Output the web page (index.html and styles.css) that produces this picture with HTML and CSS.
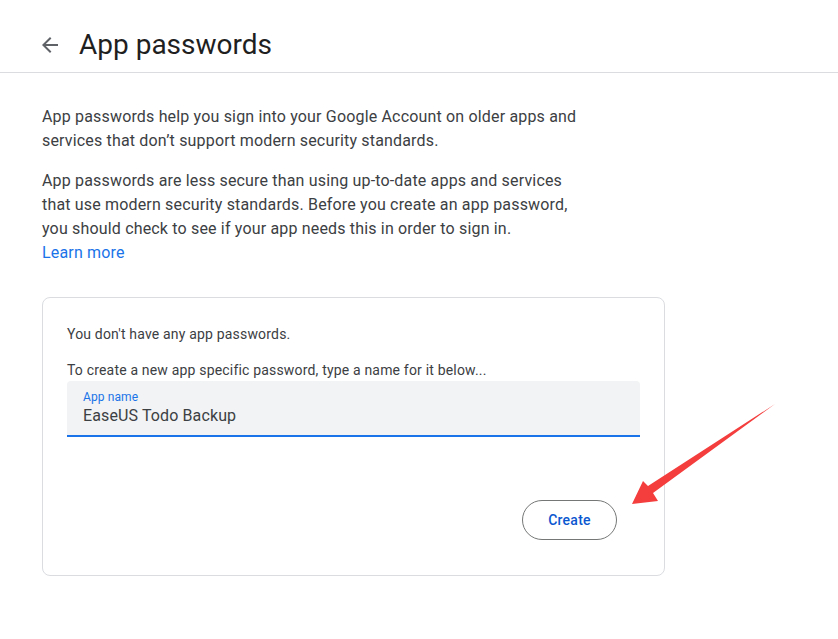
FILE: index.html
```html
<!DOCTYPE html>
<html lang="en">
<head>
<meta charset="utf-8">
<title>App passwords</title>
<link rel="stylesheet" href="styles.css">
</head>
<body>
<header class="topbar">
  <svg class="back" viewBox="0 0 24 24" width="24" height="24" aria-hidden="true"><path d="M20 11H7.83l5.59-5.59L12 4l-8 8 8 8 1.41-1.41L7.83 13H20v-2z"/></svg>
  <h1 class="title">App passwords</h1>
</header>
<main class="content">
  <p class="para">App passwords help you sign into your Google Account on older apps and services that don’t support modern security standards.</p>
  <p class="para">App passwords are less secure than using up-to-date apps and services that use modern security standards. Before you create an app password, you should check to see if your app needs this in order to sign in.<br><a class="link" href="#">Learn more</a></p>
  <section class="card">
    <p class="note">You don't have any app passwords.</p>
    <p class="note note-create">To create a new app specific password, type a name for it below...</p>
    <div class="field">
      <span class="field-label">App name</span>
      <span class="field-value">EaseUS Todo Backup</span>
    </div>
    <div class="actions">
      <button class="btn" type="button">Create</button>
    </div>
  </section>
</main>
<svg class="arrow" viewBox="0 0 838 639" width="838" height="639" aria-hidden="true">
  <polygon points="775,404 653,493 658,501 632,504 643,481 648,486"/>
</svg>
</body>
</html>
```
FILE: styles.css
```css
html, body {
  margin: 0;
  padding: 0;
  background: #ffffff;
}
body {
  font-family: Roboto, "Liberation Sans", Arial, sans-serif;
  color: #1f1f1f;
  width: 838px;
  height: 639px;
  overflow: hidden;
  position: relative;
}
.topbar {
  display: flex;
  align-items: center;
  height: 73px;
  box-sizing: border-box;
  padding: 18px 0 0 38px;
  border-bottom: 1px solid #dadce0;
}
.back {
  fill: #5f6368;
  flex: none;
}
.title {
  margin: 0 0 0 17px;
  font-size: 28px;
  font-weight: 400;
  color: #1f1f1f;
  line-height: 36px;
}
.content {
  padding: 32px 0 0 42px;
}
.para {
  margin: 0 0 16px 0;
  width: 540px;
  font-size: 16px;
  line-height: 24px;
  letter-spacing: 0.17px;
  color: #3c4043;
}
.link {
  color: #1a73e8;
  text-decoration: none;
}
.card {
  margin-top: 32px;
  width: 623px;
  height: 279px;
  box-sizing: border-box;
  border: 1px solid #dadce0;
  border-radius: 8px;
  padding: 26px 24px 0 24px;
}
.note {
  margin: 0;
  font-size: 14px;
  line-height: 20px;
  letter-spacing: 0.18px;
  color: #3c4043;
}
.note-create {
  margin-top: 16px;
}
.field {
  margin-top: 1px;
  height: 56px;
  box-sizing: border-box;
  background: #f1f3f4;
  border-bottom: 2px solid #1a73e8;
  border-radius: 4px 4px 0 0;
  padding: 8px 16px 0 16px;
  display: flex;
  flex-direction: column;
}
.field-label {
  font-size: 12px;
  line-height: 16px;
  letter-spacing: 0.1px;
  color: #1a73e8;
}
.field-value {
  font-size: 16px;
  line-height: 22px;
  letter-spacing: 0.12px;
  color: #3c4043;
}
.actions {
  display: flex;
  justify-content: flex-end;
  margin-top: 63px;
  padding-right: 24px;
}
.btn {
  width: 95px;
  height: 40px;
  margin-right: -1px;
  border: 1px solid #747775;
  border-radius: 20px;
  background: #fff;
  color: #0b57d0;
  font-family: Roboto, "Liberation Sans", Arial, sans-serif;
  font-size: 14px;
  font-weight: 500;
  letter-spacing: 0.25px;
}
.arrow {
  position: absolute;
  left: 0;
  top: 0;
  fill: #f43d3d;
  pointer-events: none;
}
```
